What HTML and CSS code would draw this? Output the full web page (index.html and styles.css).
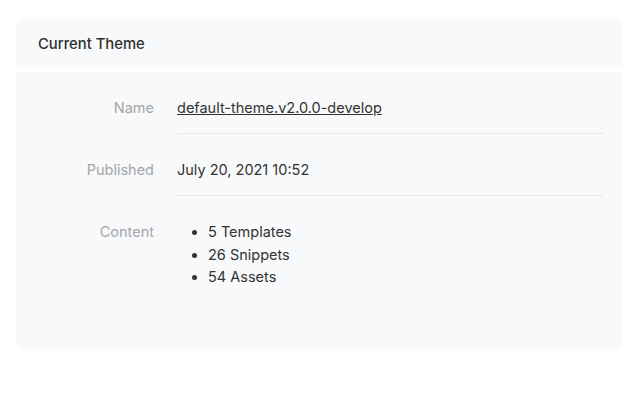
FILE: index.html
```html
<!doctype html>
<html>
<head lang="en">
    <meta charset="UTF-8">
    <title>Current Theme</title>
    <link rel="stylesheet" href="styles.css">
</head>
<body>
<div class="card">
    <header class="card-head">Current Theme</header>
    <section class="card-body">
        <div class="row">
            <div class="label">Name</div>
            <div class="value"><a href="#">default-theme.v2.0.0-develop</a></div>
        </div>
        <div class="row">
            <div class="label">Published</div>
            <div class="value">July 20, 2021 10:52</div>
        </div>
        <div class="row last">
            <div class="label">Content</div>
            <div class="value">
                <ul>
                    <li>5 Templates</li>
                    <li>26 Snippets</li>
                    <li>54 Assets</li>
                </ul>
            </div>
        </div>
    </section>
</div>
</body>
</html>
```

FILE: styles.css
```css
* {
    padding: 0;
    margin: 0;
    box-sizing: border-box;
}

body {
    background: #fff;
    padding: 19px 17px 0 16px;
    font-family: Inter, "Liberation Sans", sans-serif;
    font-size: 14.5px;
    color: #333;
}

.card {
    border-radius: 8px;
    overflow: hidden;
}

.card-head {
    height: 49px;
    background: #f8f9fa;
    line-height: 48px;
    padding: 1px 0 0 22px;
    font-size: 14.8px;
    font-weight: 500;
    color: #2f3033;
}

.card-body {
    margin-top: 4px;
    background: #f8f9fa;
    padding: 0 20px 47px 0;
}

.row {
    display: flex;
    line-height: 22.5px;
}

.label {
    width: 138px;
    padding-top: 25px;
    text-align: right;
    color: #a3a6ab;
}

.value {
    flex: 1;
    margin-left: 23px;
    padding: 25px 0 13.5px;
    border-bottom: 1px solid #e6e7ea;
    color: #333;
}

.row.last .value {
    border-bottom: none;
}

.value a {
    color: #333;
    text-decoration: underline;
}

.value ul {
    padding-left: 31px;
}
```
